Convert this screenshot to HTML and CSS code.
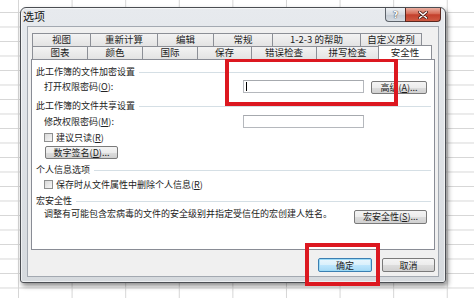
FILE: index.html
```html
<!DOCTYPE html>
<html lang="zh-CN">
<head>
    <meta charset="UTF-8">
    <title>选项</title>
    <link rel="stylesheet" href="styles.css">
</head>
<body>
    <div class="dialog">
        <div class="titlebar">
            <span class="title">选项</span>
            <div class="caption-btns">
                <span class="cap-help">?</span>
                <span class="cap-close">
                    <svg width="10" height="8" viewBox="0 0 10 8">
                        <path d="M1.5 1 L8.5 7 M8.5 1 L1.5 7" stroke="#4a1a14" stroke-width="3" stroke-linecap="round"/>
                        <path d="M1.5 1 L8.5 7 M8.5 1 L1.5 7" stroke="#ffffff" stroke-width="1.6" stroke-linecap="round"/>
                    </svg>
                </span>
            </div>
        </div>

        <div class="client">
            <div class="tabs">
                <div class="tab-row back">
                    <span class="tab">视图</span>
                    <span class="tab">重新计算</span>
                    <span class="tab">编辑</span>
                    <span class="tab">常规</span>
                    <span class="tab">1-2-3 的帮助</span>
                    <span class="tab">自定义序列</span>
                </div>
                <div class="tab-row front">
                    <span class="tab">图表</span>
                    <span class="tab">颜色</span>
                    <span class="tab">国际</span>
                    <span class="tab">保存</span>
                    <span class="tab">错误检查</span>
                    <span class="tab">拼写检查</span>
                    <span class="tab active">安全性</span>
                </div>
            </div>

            <div class="panel">
                <div class="group-title first"><span>此工作簿的文件加密设置</span></div>
                <div class="field-row">
                    <span class="field-label">打开权限密码(<u>O</u>):</span>
                    <span class="textbox focused"><i class="caret"></i></span>
                    <span class="btn btn-small">高级(<u>A</u>)...</span>
                </div>

                <div class="group-title"><span>此工作簿的文件共享设置</span></div>
                <div class="field-row second">
                    <span class="field-label">修改权限密码(<u>M</u>):</span>
                    <span class="textbox"></span>
                </div>
                <div class="check-row">
                    <span class="checkbox"></span>
                    <span>建议只读(<u>R</u>)</span>
                </div>
                <div class="sign-row">
                    <span class="btn btn-sign">数字签名(<u>D</u>)...</span>
                </div>

                <div class="group-title"><span>个人信息选项</span></div>
                <div class="check-row">
                    <span class="checkbox"></span>
                    <span>保存时从文件属性中删除个人信息(<u>R</u>)</span>
                </div>

                <div class="group-title"><span>宏安全性</span></div>
                <div class="macro-row">
                    <span>调整有可能包含宏病毒的文件的安全级别并指定受信任的宏创建人姓名。</span>
                    <span class="btn btn-macro">宏安全性(<u>S</u>)...</span>
                </div>
            </div>

            <div class="footer">
                <span class="btn btn-ok">确定</span>
                <span class="btn btn-cancel">取消</span>
            </div>
        </div>
    </div>

    <!-- red annotation boxes drawn over the screenshot -->
    <div class="mark mark-password"></div>
    <div class="mark mark-ok"></div>
</body>
</html>
```

FILE: styles.css
```css
* {
    box-sizing: border-box;
}

body {
    margin: 0;
    width: 474px;
    height: 298px;
    overflow: hidden;
    position: relative;
    font-family: "Noto Sans CJK SC", "Noto Sans", sans-serif;
    font-size: 9px;
    color: #222222;
    background-color: #ffffff;
    /* spreadsheet grid behind the dialog */
    background-image:
        linear-gradient(to right, #d6d6d6 1px, transparent 1px),
        linear-gradient(to bottom, #d6d6d6 1px, transparent 1px);
    background-size: 53.6px 14.5px;
    background-position: 18px 12px;
}

u {
    text-decoration: underline;
    text-underline-offset: 1px;
}

.dialog {
    margin: 7px 0 0 20px;
    width: 426px;
    height: 276px;
    border: 1px solid #4b4e53;
    border-radius: 6px 6px 3px 3px;
    background: linear-gradient(#e7eaee, #d6dade);
    box-shadow: 2px 3px 5px rgba(0, 0, 0, 0.45), inset 0 0 0 1px rgba(255, 255, 255, 0.55);
    padding: 0 6px 5px 6px;
    display: flex;
    flex-direction: column;
}

.titlebar {
    height: 18px;
    margin: 0 -6px;
    display: flex;
    align-items: flex-start;
}

.title {
    font-size: 11px;
    line-height: 14px;
    padding: 1px 0 0 2px;
    color: #111111;
}

.caption-btns {
    margin-left: auto;
    margin-right: 4px;
    display: flex;
}

.cap-help, .cap-close {
    height: 14px;
    display: flex;
    align-items: center;
    justify-content: center;
    border: 1px solid #5d636b;
    border-top: none;
}

.cap-help {
    width: 20px;
    border-radius: 0 0 0 4px;
    border-right: none;
    background: linear-gradient(#eef1f4, #d3d9e0 50%, #c3cad3 51%, #d6dce3);
    color: #ffffff;
    font-family: "DejaVu Sans", sans-serif;
    font-size: 9px;
    font-weight: bold;
    text-shadow: 0 0 1px #3a3f46, 0 0 1px #3a3f46;
}

.cap-close {
    width: 36px;
    border-radius: 0 0 4px 0;
    border-color: #5a2820;
    background: linear-gradient(#eab0a2, #d66a55 45%, #c3402c 52%, #cf5a43);
}

.client {
    flex: 1;
    background: #f0f0f0;
    border: 1px solid #a3a9b1;
    padding: 6px 3px 0 3px;
    display: flex;
    flex-direction: column;
}

/* tabs */
.tabs {
    margin-left: 1px;
    height: 26px;
}

.tab-row {
    display: grid;
    height: 13px;
}

.tab-row.back {
    grid-template-columns: 58px 67px 56px 59px 88px 62px;
}

.tab-row.front {
    grid-template-columns: 55px 55px 55px 54px 65px 62px 54px;
}

.tab {
    height: 13px;
    border: 1px solid #8c8f96;
    border-right: none;
    border-bottom: none;
    background: linear-gradient(#f3f3f3, #e3e3e3);
    font-size: 9.5px;
    line-height: 11px;
    text-align: center;
    white-space: nowrap;
    overflow: hidden;
    color: #1c1c1c;
}

.tab:last-child {
    border-right: 1px solid #8c8f96;
}

.tab-row.front .tab {
    position: relative;
    z-index: 1;
}

.tab.active {
    background: #ffffff;
    height: 14px;
    margin-top: -1px;
    line-height: 13px;
    z-index: 2;
    border-left: 1px solid #8c8f96;
}

/* page */
.panel {
    height: 191px;
    border: 1px solid #898c95;
    background: #ffffff;
    padding: 6px 3px 0 4px;
}

.group-title {
    display: flex;
    align-items: center;
    height: 12px;
    line-height: 12px;
    margin-top: 5px;
    white-space: nowrap;
}

.group-title.first {
    margin-top: 0;
}

.group-title::after {
    content: "";
    flex: 1;
    height: 1px;
    margin-left: 4px;
    background: #d5dfe5;
}

.field-row {
    display: flex;
    align-items: flex-start;
    height: 14px;
    margin: 2px 0 0 8px;
    line-height: 14px;
}

.field-row.second {
    margin-top: 3px;
}

.group-title + .field-row {
    margin-bottom: 6px;
}

.group-title + .field-row.second {
    margin-bottom: 0;
}

.field-label {
    flex: 0 0 199px;
    white-space: nowrap;
}

.textbox {
    width: 121px;
    height: 13px;
    border: 1px solid #b5b8bd;
    border-top-color: #a6a9ae;
    background: #ffffff;
    display: flex;
    align-items: center;
    padding-left: 2px;
}

.caret {
    width: 1px;
    height: 9px;
    background: #000000;
}

.btn {
    display: flex;
    align-items: center;
    justify-content: center;
    height: 13px;
    border: 1px solid #7a7a7a;
    border-radius: 2px;
    background: linear-gradient(#f4f4f4, #ececec 50%, #dddddd 51%, #d0d0d0);
    white-space: nowrap;
    color: #1c1c1c;
    font-size: 9px;
}

.btn-small {
    width: 56px;
    margin: 1px 0 0 7px;
}

.check-row {
    display: flex;
    align-items: center;
    height: 12px;
    margin: 2px 0 0 8px;
    gap: 3px;
    white-space: nowrap;
}

.checkbox {
    width: 9px;
    height: 9px;
    border: 1px solid #8e8f8f;
    background: linear-gradient(135deg, #d8d8d8, #f7f7f7);
}

.sign-row {
    margin: 3px 0 0 9px;
}

.btn-sign {
    width: 73px;
}

.group-title.first + .field-row + .group-title {
    margin-top: 0;
}

.macro-row {
    display: flex;
    justify-content: space-between;
    align-items: flex-start;
    margin: 1px 4px 0 8px;
    line-height: 12px;
    white-space: nowrap;
}

.btn-macro {
    width: 73px;
    height: 14px;
    margin-top: 2px;
}

/* dialog buttons */
.footer {
    display: flex;
    justify-content: flex-end;
    gap: 10px;
    padding-top: 8px;
}

.btn-ok, .btn-cancel {
    height: 14px;
}

.btn-ok {
    width: 54px;
    border-color: #3c7fb1;
    background: linear-gradient(#eaf6fd, #d9f0fc 50%, #bee6fd 51%, #a7d9f5);
    box-shadow: inset 0 0 0 1px #9ddbf7;
}

.btn-cancel {
    width: 53px;
}

/* red annotation rectangles */
.mark {
    position: absolute;
    border: 4px solid #dc1820;
}

.mark-password {
    left: 225px;
    top: 58px;
    width: 173px;
    height: 48px;
}

.mark-ok {
    left: 305px;
    top: 243px;
    width: 75px;
    height: 43px;
}
```
